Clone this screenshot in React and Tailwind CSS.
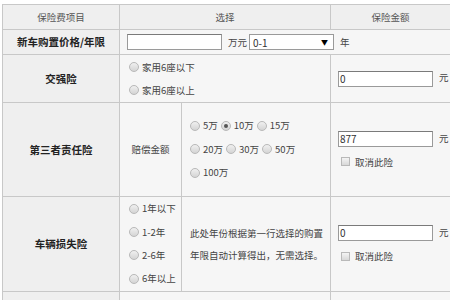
import React from "react";

const Radio = ({ checked }) => (
  <span className="inline-block align-middle ml-[3px] mr-[3px] w-[10px] h-[10px] rounded-full border border-[#b9b9b9] bg-gradient-to-b from-[#f0f0f0] to-[#d4d4d4] relative top-[-1px]">
    {checked && (
      <span className="absolute left-[2px] top-[2px] w-[4px] h-[4px] rounded-full bg-[#555]" />
    )}
  </span>
);

const Check = () => (
  <span className="inline-block align-middle w-[9px] h-[9px] border border-[#b9b9b9] bg-gradient-to-b from-[#f4f4f4] to-[#d8d8d8] mr-[5px] relative top-[-1px]" />
);

const Box = ({ value, w = "w-[95px]" }) => (
  <span
    className={`inline-block align-middle ${w} h-[16px] border border-[#9a9a9a] border-t-[#7a7a7a] bg-white text-[10px] leading-[14px] pl-[1px] text-[#333]`}
  >
    {value}
  </span>
);

export default function App() {
  const td = "border border-[#c8c8c8] p-0";
  const label = `${td} bg-[#efefef] text-center font-bold text-[10.5px] text-[#222]`;
  const cell = `${td} bg-[#f6f6f6]`;

  return (
    <div
      className="w-[450px] h-[300px] overflow-hidden bg-white pt-[4px] pl-[2px] text-[9.5px] text-[#444]"
      style={{ fontFamily: '"Noto Sans CJK SC", "Noto Sans", sans-serif' }}
    >
      <table className="border-collapse table-fixed w-[452px]">
        <colgroup>
          <col className="w-[117px]" />
          <col className="w-[62px]" />
          <col className="w-[149px]" />
          <col className="w-[124px]" />
        </colgroup>
        <tbody>
          <tr className="h-[25px]">
            <td className={`${td} bg-[#efefef] text-center text-[#555]`}>保险费项目</td>
            <td colSpan={2} className={`${td} bg-[#efefef] text-center text-[#555]`}>选择</td>
            <td className={`${td} bg-[#efefef] text-center text-[#555] pr-[4px]`}>保险金额</td>
          </tr>
          <tr className="h-[25px]">
            <td className={label}>新车购置价格/年限</td>
            <td colSpan={3} className={`${cell} pl-[7px]`}>
              <div className="flex items-center">
                <Box value="" />
                <span className="ml-[6px] mr-[2px]">万元</span>
                <span className="flex items-center justify-between w-[85px] h-[16px] border border-[#9a9a9a] bg-white pl-[3px] pr-[5px] text-[10px] text-[#333]">
                  <span>0-1</span>
                  <span className="text-[7px] text-black">▼</span>
                </span>
                <span className="ml-[6px]">年</span>
              </div>
            </td>
          </tr>
          <tr className="h-[48px]">
            <td className={label}>交强险</td>
            <td colSpan={2} className={`${cell} pl-[6px] leading-[23px]`}>
              <div><Radio />家用6座以下</div>
              <div><Radio />家用6座以上</div>
            </td>
            <td className={`${cell} pl-[7px]`}>
              <Box value="0" />
              <span className="ml-[6px]">元</span>
            </td>
          </tr>
          <tr className="h-[94px]">
            <td className={label}>第三者责任险</td>
            <td className={`${cell} text-center`}>赔偿金额</td>
            <td className={`${cell} pl-[5px] leading-[23.5px]`}>
              <div><Radio />5万<Radio checked />10万<Radio />15万</div>
              <div><Radio />20万<Radio />30万<Radio />50万</div>
              <div><Radio />100万</div>
            </td>
            <td className={`${cell} pl-[7px] leading-[24px]`}>
              <div>
                <Box value="877" />
                <span className="ml-[6px]">元</span>
              </div>
              <div className="pl-[3px]"><Check />取消此险</div>
            </td>
          </tr>
          <tr className="h-[95px]">
            <td className={label}>车辆损失险</td>
            <td className={`${cell} pl-[6px] leading-[23.3px]`}>
              <div><Radio />1年以下</div>
              <div><Radio />1-2年</div>
              <div><Radio />2-6年</div>
              <div><Radio />6年以上</div>
            </td>
            <td className={`${cell} pl-[8px] pr-[6px] leading-[22px]`}>
              此处年份根据第一行选择的购置年限自动计算得出，无需选择。
            </td>
            <td className={`${cell} pl-[7px] leading-[24px]`}>
              <div>
                <Box value="0" />
                <span className="ml-[6px]">元</span>
              </div>
              <div className="pl-[3px]"><Check />取消此险</div>
            </td>
          </tr>
          <tr className="h-[40px]">
            <td className={label}></td>
            <td colSpan={2} className={cell}></td>
            <td className={cell}></td>
          </tr>
        </tbody>
      </table>
    </div>
  );
}
